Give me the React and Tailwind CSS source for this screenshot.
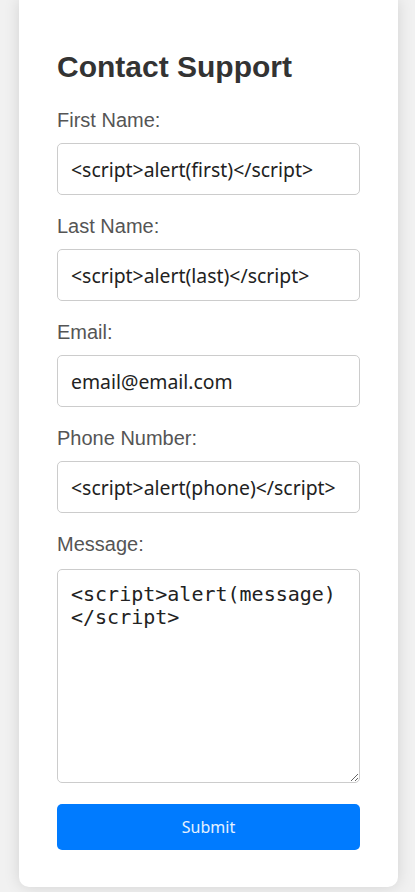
import React from "react";

const fields = [
  { label: "First Name:", value: "<script>alert(first)</script>" },
  { label: "Last Name:", value: "<script>alert(last)</script>" },
  { label: "Email:", value: "email@email.com" },
  { label: "Phone Number:", value: "<script>alert(phone)</script>" },
];

export default function App() {
  return (
    <div className="min-h-screen bg-[#f1f1f1] font-['Liberation_Sans',Arial,sans-serif]">
      <div className="ml-[19px] w-[379px] bg-white rounded-b-[10px] shadow-[0_0_16px_rgba(0,0,0,0.13)] px-[38px] pt-[49px] pb-[37px]">
        <h2 className="text-[30px] leading-[35px] font-bold text-[#333] mb-[25px]">Contact Support</h2>
        <form onSubmit={(e) => e.preventDefault()}>
          {fields.map((f) => (
            <div key={f.label} className="mb-[20px]">
              <label className="block text-[20px] leading-[23px] text-[#555] mb-[11px]">{f.label}</label>
              <input
                type="text"
                defaultValue={f.value}
                className="block w-full h-[52px] px-[13px] border border-[#ccc] rounded-[5px] text-[19.4px] text-[#222] font-['Noto_Sans',sans-serif] outline-none"
              />
            </div>
          ))}
          <div className="mb-[21px]">
            <label className="block text-[20px] leading-[23px] text-[#555] mb-[13px]">Message:</label>
            <textarea
              defaultValue="<script>alert(message)</script>"
              className="block w-full h-[214px] px-[13px] py-[13px] border border-[#ccc] rounded-[5px] text-[20px] leading-[23px] text-[#222] font-['DejaVu_Sans_Mono',monospace] outline-none"
            />
          </div>
          <button
            type="submit"
            className="block w-full h-[46px] bg-[#007bff] text-white/90 text-[16px] rounded-[5px] font-['Noto_Sans',sans-serif]"
          >
            Submit
          </button>
        </form>
      </div>
    </div>
  );
}
